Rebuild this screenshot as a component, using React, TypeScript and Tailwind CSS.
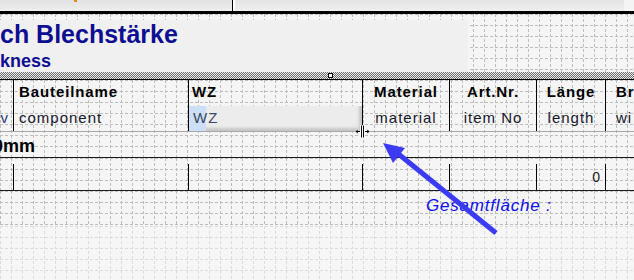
import type { ReactNode } from "react";

// dashed layout grid of the report designer
const GRID =
  "bg-[#f5f5f5] bg-[image:conic-gradient(at_1px_3px,transparent_75%,#bdbdbd_0%),conic-gradient(at_3px_1px,transparent_75%,#bdbdbd_0%)] bg-size-[11px_5px,5px_11px]";
const GRID_LIGHT =
  "bg-[#f6f6f6] bg-[image:conic-gradient(at_1px_3px,transparent_75%,#dcdcdc_0%),conic-gradient(at_3px_1px,transparent_75%,#dcdcdc_0%)] bg-size-[11px_5px,5px_11px]";
const DOTS =
  "bg-[image:conic-gradient(#6a6a6a_25%,#ececec_0%_50%,#6a6a6a_0%_75%,#ececec_0%)] bg-size-[2px_2px]";

const COLS = [
  "w-[13px] justify-end pr-[4px]",
  "w-[175px] border-l border-black pl-[5px]",
  "w-[174px] border-l border-black pl-[3px]",
  "w-[87px] border-l border-black justify-center",
  "w-[87px] border-l border-black justify-center",
  "w-[69px] border-l border-black justify-center",
  "flex-1 border-l border-black pl-[10px]",
];

function Cells({ items, className }: { items: ReactNode[]; className?: string }) {
  return (
    <div className={`flex ${className ?? ""}`}>
      {items.map((item, i) => (
        <div key={i} className={`flex h-full shrink-0 items-center overflow-hidden whitespace-nowrap ${COLS[i]}`}>
          {item}
        </div>
      ))}
    </div>
  );
}

function ResizeCursor() {
  return (
    <svg width="17" height="13" viewBox="0 0 17 13" className="absolute left-[354px] top-[125px]">
      <rect x="6" y="0" width="5" height="13" fill="#fff" />
      <rect x="7" y="0.5" width="1" height="12" fill="#000" />
      <rect x="9" y="0.5" width="1" height="12" fill="#000" />
      <path d="M1 6.5 L4 4 L4 9 Z" fill="#000" stroke="#fff" strokeWidth="0.6" />
      <path d="M16 6.5 L13 4 L13 9 Z" fill="#000" stroke="#fff" strokeWidth="0.6" />
      <rect x="3" y="6" width="3" height="1" fill="#000" />
      <rect x="11" y="6" width="3" height="1" fill="#000" />
    </svg>
  );
}

function Arrow() {
  return (
    <svg width="634" height="280" className="pointer-events-none absolute left-0 top-0">
      <line x1="496" y1="233" x2="396" y2="152" stroke="#3b3bf4" strokeWidth="5" strokeLinecap="butt" />
      <polygon points="383,143 405,148 393,163" fill="#3b3bf4" />
    </svg>
  );
}

export default function App() {
  return (
    <div className="relative flex h-[280px] w-[634px] flex-col overflow-hidden bg-white font-['Liberation_Sans',Arial,sans-serif]">
      {/* toolbar strip */}
      <div className="flex h-[11px]">
        <div className="relative w-[232px] bg-gradient-to-b from-[#e2e2e2] to-[#eeeeee]">
          <div className="absolute left-[74px] top-0 h-[2px] w-[3px] bg-[#e08a1e]" />
        </div>
        <div className="w-px bg-black" />
        <div className="w-[2px] bg-white" />
        <div className="w-[389px] bg-gradient-to-b from-[#e4e4e4] to-[#efefef]" />
        <div className="flex-1 bg-[#f4f4f4]" />
      </div>
      <div className="h-[3px] bg-black" />

      {/* title band */}
      <div className={`flex pt-[6px] ${GRID}`}>
        <div className="h-[52px] w-[468px] bg-[#f0f0f0] font-bold text-[#0e0e92]">
          <div className="h-[28px] whitespace-nowrap text-[25px] leading-[28px]">ch Blechstärke</div>
          <div className="mt-[2px] h-[22px] whitespace-nowrap text-[18px] leading-[22px]">kness</div>
        </div>
        <div className="flex-1" />
      </div>
      <div className={`relative h-[7px] ${DOTS}`}>
        <div className="absolute left-[328px] top-[1px] h-[5px] w-[5px] border border-black bg-white" />
      </div>
      <div className="h-px bg-black" />

      {/* column header + field row */}
      <div className={`relative ${GRID}`}>
        <Cells
          className="h-[25px] text-[15px] font-bold tracking-[0.9px] text-black"
          items={["", "Bauteilname", "WZ", "Material", "Art.Nr.", "Länge", "Br"]}
        />
        <Cells
          className="h-[26px] text-[15px] tracking-[1px] text-[#15152c]"
          items={[
            <span className="text-[#2a3a80]">v</span>,
            "component",
            <span className="relative -ml-[3px] flex h-[25px] w-[173px] items-center bg-[#ececec] pl-[4px] text-[#3a4766] shadow-[inset_-3px_-3px_3px_rgba(0,0,0,0.16)]">
              <span className="absolute left-0 top-0 h-[25px] w-[17px] bg-[#cddff6]" />
              <span className="relative">WZ</span>
            </span>,
            "material",
            "item No",
            "length",
            "wi",
          ]}
        />
        <div className="h-px bg-[#a8a8a8]" />
        <div className="flex h-[25px] items-center whitespace-nowrap pt-[4px] text-[18px] font-bold text-black">
          <span className="-ml-[7px]">0mm</span>
        </div>
      </div>
      <div className="h-px bg-[#1a1a1a]" />

      {/* totals row */}
      <div className={`h-[32px] pt-[6px] ${GRID}`}>
        <Cells
          className="h-[26px] text-[14px] text-[#1a1a1a]"
          items={["", "", "", "", "", <span className="ml-auto pr-[5px]">0</span>, ""]}
        />
      </div>
      <div className="h-px bg-[#1a1a1a]" />

      <div className={`h-[35px] pl-[426px] pt-[5px] ${GRID}`}>
        <div className="whitespace-nowrap text-[17px] italic leading-[20px] tracking-[0.8px] text-[#0b0bf0]">
          Gesamtfläche :
        </div>
      </div>
      <div className={`flex-1 ${GRID_LIGHT}`} />

      <ResizeCursor />
      <Arrow />
    </div>
  );
}
